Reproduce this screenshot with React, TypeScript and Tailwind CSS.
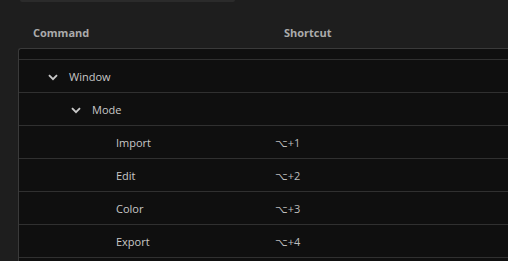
import { ReactNode } from "react";

type Row = { label: string; level: number; shortcut?: string; open?: boolean };

const rows: Row[] = [
  { label: "", level: 1 },
  { label: "Window", level: 1, open: true },
  { label: "Mode", level: 2, open: true },
  { label: "Import", level: 3, shortcut: "⌥+1" },
  { label: "Edit", level: 3, shortcut: "⌥+2" },
  { label: "Color", level: 3, shortcut: "⌥+3" },
  { label: "Export", level: 3, shortcut: "⌥+4" },
];

const indent: Record<number, string> = {
  1: "pl-[29px]",
  2: "pl-[52px]",
  3: "pl-[97px]",
};

const Chevron = () => (
  <svg width="10" height="7" viewBox="0 0 10 7" className="mr-[11px] shrink-0">
    <path d="M1 1.2 L5 5.2 L9 1.2" fill="none" stroke="#c8c8c8" strokeWidth="1.9" />
  </svg>
);

const Cell = ({ children }: { children: ReactNode }) => (
  <div className="flex items-center h-full pt-[3px]">{children}</div>
);

export default function App() {
  return (
    <div
      className="w-[508px] h-[261px] bg-[#1e1e1e] overflow-hidden flex flex-col"
      style={{ fontFamily: '"Open Sans", "DejaVu Sans", sans-serif' }}
    >
      {/* bottom of the search field above */}
      <div className="ml-[20px] w-[215px] h-[2px] bg-[#2b2b2b] rounded-b-[2px] shrink-0" />

      {/* header */}
      <div className="flex items-center h-[46px] pt-[16px] text-[11px] font-bold text-[#ababab] shrink-0">
        <div className="pl-[33px] w-[284px]">Command</div>
        <div>Shortcut</div>
      </div>

      {/* table, scrolled a little */}
      <div className="ml-[18px] flex-1 bg-[#0f0f0f] border-t border-l border-[#3a3a3a] rounded-tl-[3px] overflow-hidden">
        <div className="-mt-[22px]">
          {rows.map((r, i) => (
            <div
              key={i}
              className="flex h-[33px] border-b border-[#303030] text-[11px] text-[#c8c8c8]"
            >
              <div className={`w-[256px] ${indent[r.level]}`}>
                <Cell>
                  {r.open && <Chevron />}
                  <span>{r.label}</span>
                </Cell>
              </div>
              <div className="text-[#bdbdbd]">
                <Cell>{r.shortcut}</Cell>
              </div>
            </div>
          ))}
        </div>
      </div>
    </div>
  );
}
